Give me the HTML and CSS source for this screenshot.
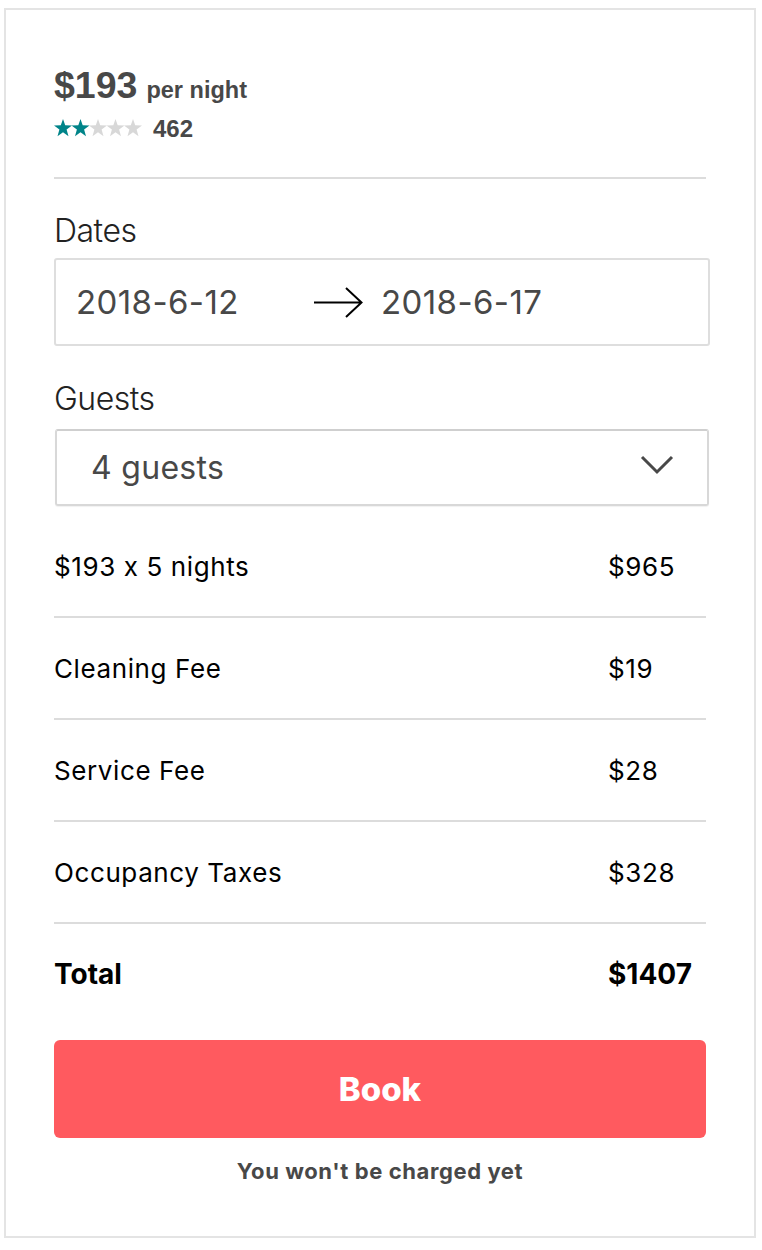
FILE: index.html
```html
<!DOCTYPE html>
<html>
<head>
<meta charset="utf-8">
<link rel="stylesheet" href="styles.css">
</head>
<body>
<div class="card">
  <div class="price">
    <span class="amount">$193</span>
    <span class="per">per night</span>
  </div>
  <div class="rating">
    <svg class="stars" width="89" height="18" viewBox="0 0 89 18">
      <defs>
        <polygon id="st" points="9,0 11.2,6.3 18,6.5 12.6,10.6 14.5,17.2 9,13.3 3.5,17.2 5.4,10.6 0,6.5 6.8,6.3"/>
      </defs>
      <use href="#st" x="0" fill="#008489"/>
      <use href="#st" x="17.5" fill="#008489"/>
      <use href="#st" x="35" fill="#d8d8d8"/>
      <use href="#st" x="52.5" fill="#d8d8d8"/>
      <use href="#st" x="70" fill="#d8d8d8"/>
    </svg>
    <span class="count">462</span>
  </div>
  <div class="divider"></div>

  <div class="label">Dates</div>
  <div class="datebox">
    <span class="date first">2018-6-12</span>
    <svg class="arrow" width="50" height="32" viewBox="0 0 50 32">
      <path d="M0 16.5 H47.5 M32 2 L47.5 16.5 L32 31" fill="none" stroke="#000" stroke-width="2"/>
    </svg>
    <span class="date">2018-6-17</span>
  </div>

  <div class="label guests-label">Guests</div>
  <div class="select">
    <span class="select-text">4 guests</span>
    <svg class="chev" width="34" height="20" viewBox="0 0 34 20">
      <path d="M2 2 L17 17 L32 2" fill="none" stroke="#484848" stroke-width="3"/>
    </svg>
  </div>

  <div class="rows">
    <div class="row"><span>$193 x 5 nights</span><span class="val">$965</span></div>
    <div class="row"><span>Cleaning Fee</span><span class="val">$19</span></div>
    <div class="row"><span>Service Fee</span><span class="val">$28</span></div>
    <div class="row"><span>Occupancy Taxes</span><span class="val">$328</span></div>
    <div class="row total"><span>Total</span><span class="val">$1407</span></div>
  </div>

  <button class="book">Book</button>
  <div class="note">You won't be charged yet</div>
</div>
</body>
</html>
```
FILE: styles.css
```css
* { box-sizing: border-box; }
html, body { margin: 0; padding: 0; background: #fff; }
body { padding: 8px 6px 0 4px; }

.card {
  border: 2px solid #e4e4e4;
  height: 1230px;
  padding: 53px 48px 0 48px;
  font-family: Inter, "Liberation Sans", sans-serif;
  font-feature-settings: "calt" 0;
}

.price {
  display: flex;
  align-items: baseline;
  gap: 9px;
  font-family: "Liberation Sans", Arial, sans-serif;
  font-weight: bold;
  color: #484848;
  line-height: 44px;
}
.amount { font-size: 37.5px; }
.per { font-size: 23.5px; }

.rating {
  display: flex;
  align-items: center;
  gap: 10px;
  margin-top: 3px;
  height: 28px;
}
.stars { display: block; margin-top: -2px; }
.count {
  font-family: "Liberation Sans", Arial, sans-serif;
  font-weight: bold;
  font-size: 24px;
  color: #484848;
  line-height: 28px;
}

.divider {
  height: 2px;
  background: #dcdcdc;
  margin-top: 34px;
}

.label {
  font-family: Inter, sans-serif;
  font-weight: 300;
  font-size: 32px;
  line-height: 38px;
  color: #222;
  margin-top: 33px;
  letter-spacing: -0.5px;
}

.datebox {
  margin-top: 8px;
  width: 656px;
  height: 88px;
  border: 2px solid #dedede;
  border-radius: 3px;
  display: flex;
  align-items: center;
  padding-left: 20px;
}
.date {
  font-size: 33px;
  color: #484848;
  letter-spacing: 0.4px;
}
.date.first { width: 238px; }
.arrow { display: block; margin-right: 17px; }

.guests-label { margin-top: 34px; }

.select {
  margin: 11px 1px 0 1px;
  width: 654px;
  height: 77px;
  border: 2px solid #d8d8d8;
  border-top-color: #cfcfcf;
  border-radius: 3px;
  box-shadow: 0 1px 1px rgba(0,0,0,0.06);
  display: flex;
  align-items: center;
  justify-content: space-between;
  padding: 0 33px 0 34px;
}
.select-text {
  font-size: 32px;
  color: #484848;
  letter-spacing: 0.3px;
}
.chev { display: block; margin-top: -6px; }

.rows { margin-top: 10px; }
.row {
  display: grid;
  grid-template-columns: 1fr 98px;
  align-items: center;
  height: 102px;
  border-bottom: 2px solid #dcdcdc;
  font-size: 26px;
  letter-spacing: 0.6px;
  color: #000;
}
.row.total {
  border-bottom: none;
  height: 100px;
  font-weight: 700;
  font-size: 28px;
  letter-spacing: 0;
}

.book {
  display: block;
  width: 100%;
  height: 98px;
  margin-top: 16px;
  border: none;
  border-radius: 6px;
  background: #ff5a5f;
  color: #fff;
  font-family: Inter, sans-serif;
  font-weight: 800;
  font-size: 33px;
  padding: 0;
}

.note {
  text-align: center;
  margin-top: 19px;
  font-weight: 700;
  font-size: 22px;
  letter-spacing: 0.6px;
  color: #484848;
  line-height: 28px;
}
```
